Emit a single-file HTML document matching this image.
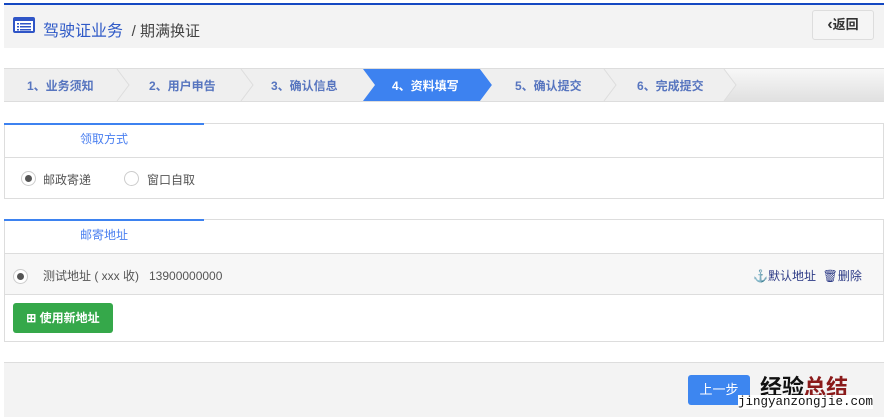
<!DOCTYPE html>
<html><head><meta charset="utf-8"><style>
*{margin:0;padding:0;box-sizing:border-box}
body{width:889px;height:419px;background:#fff;font-family:"Liberation Sans","Noto Sans CJK SC",sans-serif;position:relative;overflow:hidden;font-size:12px;color:#555}
.abs{position:absolute}
</style></head><body>
<div class="abs" style="left:4px;top:3px;width:880px;height:2px;background:#1448c2"></div>
<div class="abs" style="left:4px;top:5px;width:880px;height:43px;background:#f3f3f3"></div>
<svg class="abs" style="left:13px;top:17px" width="22" height="16" viewBox="0 0 22 16"><rect x="1" y="1" width="20" height="14" rx="1" fill="#fff" stroke="#2f55c7" stroke-width="2"/><rect x="2" y="2" width="18" height="2" fill="#2f55c7"/><g fill="#2f55c7"><rect x="4" y="6" width="2" height="1.5"/><rect x="7" y="6" width="11" height="1.5"/><rect x="4" y="9" width="2" height="1.5"/><rect x="7" y="9" width="11" height="1.5"/><rect x="4" y="12" width="2" height="1.5"/><rect x="7" y="12" width="11" height="1.5"/></g></svg>
<div class="abs" style="left:43px;top:17px;font-size:16px;color:#2f5ac7;white-space:nowrap">驾驶证业务 <span style="color:#444;font-size:15px">&nbsp;/ 期满换证</span></div>
<div class="abs" style="left:812px;top:10px;width:62px;height:30px;border:1px solid #ddd;border-radius:3px;background:#f5f5f5;font-size:13px;font-weight:bold;color:#333;line-height:28px;text-align:center"><span style="font-size:16px">‹</span>返回</div>

<svg class="abs" style="left:4px;top:68px" width="880" height="34">
<defs><linearGradient id="g" x1="0" y1="0" x2="0" y2="1"><stop offset="0" stop-color="#f8f8f8"/><stop offset="1" stop-color="#e0e0e0"/></linearGradient></defs>
<rect x="0" y="0" width="880" height="34" fill="url(#g)"/>
<line x1="0" y1="0.5" x2="880" y2="0.5" stroke="#ddd"/>
<line x1="0" y1="33.5" x2="880" y2="33.5" stroke="#ddd"/>
<polygon points="0,1 113,1 125,17 113,33 0,33" fill="#efefef"/>
<polygon points="113,1 237,1 249,17 237,33 113,33 125,17" fill="#efefef"/>
<polygon points="237,1 359,1 371,17 359,33 237,33 249,17" fill="#efefef"/>
<polygon points="359,1 476,1 488,17 476,33 359,33 371,17" fill="#3d82f0"/>
<polygon points="476,1 600,1 612,17 600,33 476,33 488,17" fill="#efefef"/>
<polygon points="600,1 720,1 732,17 720,33 600,33 612,17" fill="#efefef"/>
<polyline points="113,1 125,17 113,33" fill="none" stroke="#ddd"/>
<polyline points="237,1 249,17 237,33" fill="none" stroke="#ddd"/>
<polyline points="600,1 612,17 600,33" fill="none" stroke="#ddd"/>
<polyline points="720,1 732,17 720,33" fill="none" stroke="#ddd"/>
</svg>
<div class="abs" style="top:77px;left:27px;font-size:12px;font-weight:bold;color:#5775bf;white-space:nowrap">1、业务须知</div>
<div class="abs" style="top:77px;left:149px;font-size:12px;font-weight:bold;color:#5775bf;white-space:nowrap">2、用户申告</div>
<div class="abs" style="top:77px;left:271px;font-size:12px;font-weight:bold;color:#5775bf;white-space:nowrap">3、确认信息</div>
<div class="abs" style="top:77px;left:392px;font-size:12px;font-weight:bold;color:#fff;white-space:nowrap">4、资料填写</div>
<div class="abs" style="top:77px;left:515px;font-size:12px;font-weight:bold;color:#5775bf;white-space:nowrap">5、确认提交</div>
<div class="abs" style="top:77px;left:637px;font-size:12px;font-weight:bold;color:#5775bf;white-space:nowrap">6、完成提交</div>

<div class="abs" style="left:4px;top:123px;width:880px;height:76px;border:1px solid #ddd"></div>
<div class="abs" style="left:4px;top:123px;width:200px;height:2px;background:#3d82f0"></div>
<div class="abs" style="left:4px;top:157px;width:880px;height:1px;background:#ddd"></div>
<div class="abs" style="left:80px;top:130px;color:#4a7ff0">领取方式</div>
<div class="abs" style="left:21px;top:171px;width:15px;height:15px;border:1px solid #ccc;border-radius:50%;background:#fff"><div style="margin:3px;width:7px;height:7px;border-radius:50%;background:#555"></div></div>
<div class="abs" style="left:43px;top:171px;color:#555">邮政寄递</div>
<div class="abs" style="left:124px;top:171px;width:15px;height:15px;border:1px solid #ccc;border-radius:50%;background:#fff"></div>
<div class="abs" style="left:147px;top:171px;color:#555">窗口自取</div>

<div class="abs" style="left:4px;top:219px;width:880px;height:123px;border:1px solid #ddd"></div>
<div class="abs" style="left:4px;top:219px;width:200px;height:2px;background:#3d82f0"></div>
<div class="abs" style="left:5px;top:253px;width:878px;height:42px;background:#f7f7f7;border-top:1px solid #ddd;border-bottom:1px solid #ddd"></div>
<div class="abs" style="left:80px;top:226px;color:#4a7ff0">邮寄地址</div>
<div class="abs" style="left:13px;top:269px;width:15px;height:15px;border:1px solid #ccc;border-radius:50%;background:#fff"><div style="margin:3px;width:7px;height:7px;border-radius:50%;background:#555"></div></div>
<div class="abs" style="left:43px;top:267px;color:#555;white-space:nowrap">测试地址 ( xxx 收)&nbsp;&nbsp; 13900000000</div>
<div class="abs" style="left:753px;top:267px;color:#2c3a86;white-space:nowrap">⚓默认地址 &nbsp;🗑删除</div>
<div class="abs" style="left:13px;top:303px;width:100px;height:30px;background:#35a84a;border-radius:3px;color:#fff;font-weight:bold;line-height:30px;text-align:center">⊞ 使用新地址</div>

<div class="abs" style="left:4px;top:362px;width:880px;height:55px;background:#f3f3f3;border-top:1px solid #ddd"></div>
<div class="abs" style="left:688px;top:375px;width:62px;height:30px;background:#3d86f0;border-radius:3px;color:#fff;line-height:30px;text-align:center;font-size:13px">上一步</div>
<div class="abs" style="left:760px;top:370px;font-size:22px;font-weight:bold;color:#111;white-space:nowrap">经验<span style="color:#8b1a1a">总结</span></div>
<div class="abs" style="left:738px;top:395px;font-size:12.5px;color:#111;font-family:'Liberation Mono',monospace;background:#fff;white-space:nowrap">jingyanzongjie.com</div>
</body></html>
